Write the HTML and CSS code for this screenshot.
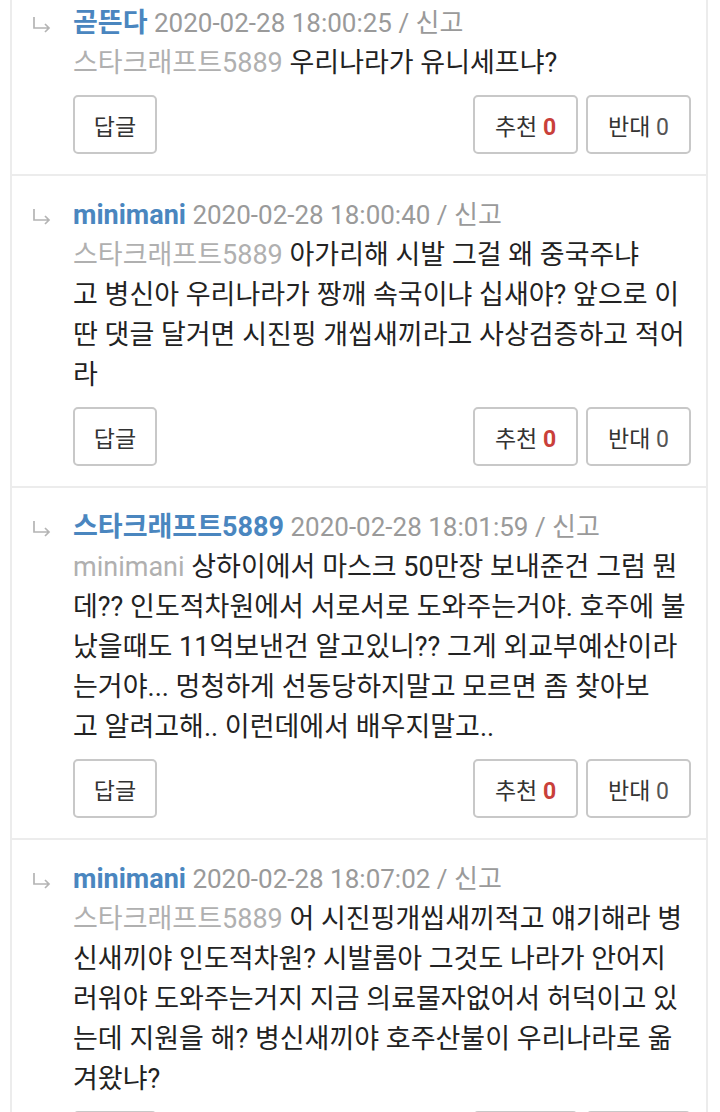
FILE: index.html
```html
<!DOCTYPE html>
<html lang="ko">
<head>
<meta charset="utf-8">
<link rel="stylesheet" href="styles.css">
</head>
<body>
<div class="list">
  <div class="item">
    <div class="arrow"><svg width="20" height="18" viewBox="0 0 20 18"><path d="M2 1 V12 H17 M13 8 L17 12 L13 16" fill="none" stroke="#b4b4b4" stroke-width="1.7"/></svg></div>
    <div class="content">
      <div class="head"><span class="user">곧뜬다</span> <span class="meta">2020-02-28 18:00:25 / 신고</span></div>
      <div class="body"><span class="mention">스타크래프트5889</span> 우리나라가 유니세프냐?</div>
      <div class="actions">
        <button class="btn reply">답글</button>
        <div class="votes"><button class="btn vote">추천 <b class="up">0</b></button><button class="btn vote">반대 <span class="down">0</span></button></div>
      </div>
    </div>
  </div>
  <div class="item">
    <div class="arrow"><svg width="20" height="18" viewBox="0 0 20 18"><path d="M2 1 V12 H17 M13 8 L17 12 L13 16" fill="none" stroke="#b4b4b4" stroke-width="1.7"/></svg></div>
    <div class="content">
      <div class="head"><span class="user">minimani</span> <span class="meta">2020-02-28 18:00:40 / 신고</span></div>
      <div class="body"><span class="mention">스타크래프트5889</span> 아가리해 시발 그걸 왜 중국주냐<br>고 병신아 우리나라가 짱깨 속국이냐 십새야? 앞으로 이<br>딴 댓글 달거면 시진핑 개씹새끼라고 사상검증하고 적어<br>라</div>
      <div class="actions">
        <button class="btn reply">답글</button>
        <div class="votes"><button class="btn vote">추천 <b class="up">0</b></button><button class="btn vote">반대 <span class="down">0</span></button></div>
      </div>
    </div>
  </div>
  <div class="item">
    <div class="arrow"><svg width="20" height="18" viewBox="0 0 20 18"><path d="M2 1 V12 H17 M13 8 L17 12 L13 16" fill="none" stroke="#b4b4b4" stroke-width="1.7"/></svg></div>
    <div class="content">
      <div class="head"><span class="user">스타크래프트5889</span> <span class="meta">2020-02-28 18:01:59 / 신고</span></div>
      <div class="body"><span class="mention">minimani</span> 상하이에서 마스크 50만장 보내준건 그럼 뭔<br>데?? 인도적차원에서 서로서로 도와주는거야. 호주에 불<br>났을때도 11억보낸건 알고있니?? 그게 외교부예산이라<br>는거야... 멍청하게 선동당하지말고 모르면 좀 찾아보<br>고 알려고해.. 이런데에서 배우지말고..</div>
      <div class="actions">
        <button class="btn reply">답글</button>
        <div class="votes"><button class="btn vote">추천 <b class="up">0</b></button><button class="btn vote">반대 <span class="down">0</span></button></div>
      </div>
    </div>
  </div>
  <div class="item">
    <div class="arrow"><svg width="20" height="18" viewBox="0 0 20 18"><path d="M2 1 V12 H17 M13 8 L17 12 L13 16" fill="none" stroke="#b4b4b4" stroke-width="1.7"/></svg></div>
    <div class="content">
      <div class="head"><span class="user">minimani</span> <span class="meta">2020-02-28 18:07:02 / 신고</span></div>
      <div class="body"><span class="mention">스타크래프트5889</span> 어 시진핑개씹새끼적고 얘기해라 병<br>신새끼야 인도적차원? 시발롬아 그것도 나라가 안어지<br>러워야 도와주는거지 지금 의료물자없어서 허덕이고 있<br>는데 지원을 해? 병신새끼야 호주산불이 우리나라로 옮<br>겨왔냐?</div>
      <div class="actions">
        <button class="btn reply">답글</button>
        <div class="votes"><button class="btn vote">추천 <b class="up">0</b></button><button class="btn vote">반대 <span class="down">0</span></button></div>
      </div>
    </div>
  </div>
</div>
</body>
</html>
```
FILE: styles.css
```css
html, body {
  margin: 0;
  padding: 0;
  background: #ffffff;
  overflow: hidden;
}
body {
  font-family: Roboto, "Noto Sans CJK KR", sans-serif;
  font-size: 27px;
  color: #222222;
}
.list {
  margin: -16px 0 0 10px;
  width: 698px;
  box-sizing: border-box;
  border-left: 2px solid #ececec;
  border-right: 2px solid #ececec;
}
.item {
  display: flex;
  padding: 19px 15px 20px 20px;
  border-bottom: 2px solid #ececec;
}
.arrow {
  width: 41px;
  flex: none;
  height: 40px;
  display: flex;
  align-items: center;
}
.arrow svg {
  display: block;
  margin-top: 4px;
}
.content {
  flex: 1;
  min-width: 0;
}
.head, .body {
  line-height: 40px;
  white-space: nowrap;
}
.head {
  font-size: 26px;
}
.user {
  color: #4a86bf;
  font-weight: bold;
  font-size: 27px;
}
.meta {
  color: #9a9a9a;
}
.mention {
  color: #b0b0b0;
}
.actions {
  display: flex;
  justify-content: space-between;
  margin-top: 12px;
}
.votes {
  display: flex;
  gap: 8px;
}
.btn {
  font-family: Roboto, "Noto Sans CJK KR", sans-serif;
  font-size: 23px;
  color: #333333;
  background: #ffffff;
  border: 2px solid #c8c8c8;
  border-radius: 5px;
  height: 59px;
  padding: 0;
  margin: 0;
  box-sizing: border-box;
}
.reply {
  width: 84px;
}
.vote {
  width: 105px;
}
.up {
  color: #c9403a;
  font-weight: bold;
}
.down {
  color: #555555;
}
```
